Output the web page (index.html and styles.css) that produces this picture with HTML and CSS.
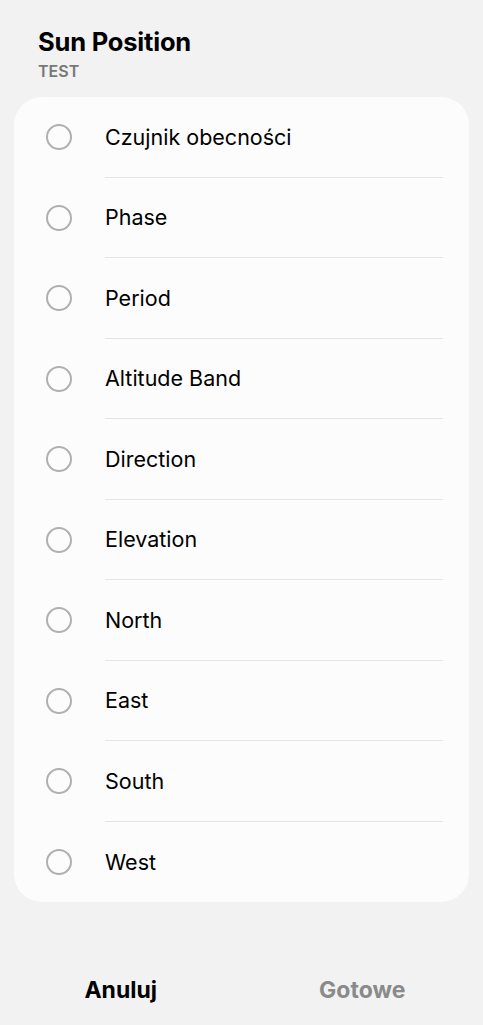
FILE: index.html
```html
<!DOCTYPE html>
<html lang="en">
<head>
    <meta charset="UTF-8">
    <meta name="viewport" content="width=device-width, initial-scale=1.0">
    <title>Sun Position</title>
    <link rel="stylesheet" href="styles.css">
</head>
<body>

<div class="dialog">
    <div class="header">
        <h2>Sun Position</h2>
        <div class="subtitle">TEST</div>
    </div>

    <ul class="options">
        <li><span class="radio"></span><span class="label">Czujnik obecności</span></li>
        <li><span class="radio"></span><span class="label">Phase</span></li>
        <li><span class="radio"></span><span class="label">Period</span></li>
        <li><span class="radio"></span><span class="label">Altitude Band</span></li>
        <li><span class="radio"></span><span class="label">Direction</span></li>
        <li><span class="radio"></span><span class="label">Elevation</span></li>
        <li><span class="radio"></span><span class="label">North</span></li>
        <li><span class="radio"></span><span class="label">East</span></li>
        <li><span class="radio"></span><span class="label">South</span></li>
        <li><span class="radio"></span><span class="label">West</span></li>
    </ul>

    <div class="buttons">
        <button class="cancel">Anuluj</button>
        <button class="done">Gotowe</button>
    </div>
</div>

</body>
</html>
```

FILE: styles.css
```css
body {
    margin: 0;
    font-family: Inter, "Noto Sans", sans-serif;
    background-color: #f2f2f3;
    color: #000;
}
.dialog {
    width: 483px;
    height: 1025px;
}
.header {
    padding: 26px 38px 0;
    height: 97px;
    box-sizing: border-box;
}
h2 {
    margin: 0;
    font-size: 25.5px;
    font-weight: 700;
    line-height: 32px;
    letter-spacing: -0.2px;
}
.subtitle {
    font-size: 16px;
    font-weight: 600;
    color: #777;
    line-height: 20px;
    margin-top: 3px;
}
.options {
    list-style: none;
    margin: 0 14px;
    padding: 0;
    background-color: #fcfcfd;
    border-radius: 28px;
}
.options li {
    display: flex;
    align-items: center;
    height: 80.5px;
}
.radio {
    width: 22px;
    height: 22px;
    border: 2px solid #b0b0b0;
    border-radius: 50%;
    margin-left: 32px;
    margin-right: 33px;
}
.label {
    font-size: 21.5px;
    flex: 1;
    align-self: stretch;
    display: flex;
    align-items: center;
    margin-right: 26px;
    border-bottom: 1px solid #e4e4e6;
}
.options li:last-child .label {
    border-bottom: none;
}
.buttons {
    display: flex;
    margin-top: 62px;
}
.buttons button {
    flex: 1;
    background: none;
    border: none;
    font-family: inherit;
    font-size: 23px;
    font-weight: 700;
    padding: 12px 0;
}
.cancel {
    color: #000;
}
.done {
    color: #8a8a8a;
}
```
